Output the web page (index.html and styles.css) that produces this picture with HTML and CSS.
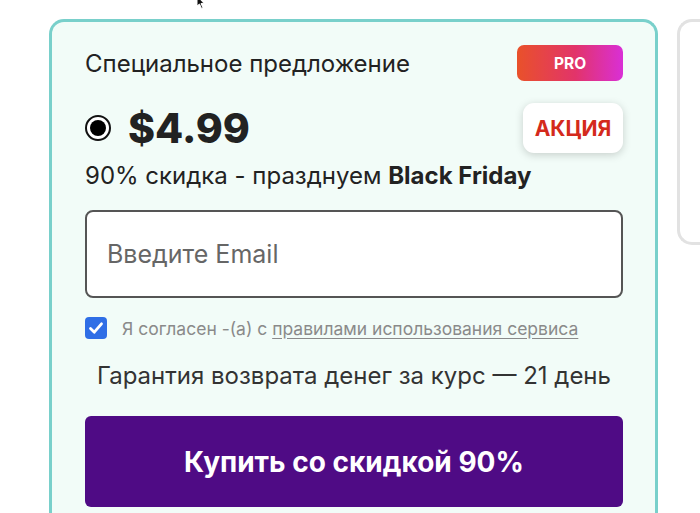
FILE: index.html
```html
<!DOCTYPE html>
<html lang="ru">
<head>
<meta charset="utf-8">
<link rel="stylesheet" href="styles.css">
</head>
<body>
<div class="page">
  <div class="card">
    <div class="row head">
      <span class="title">Специальное предложение</span>
      <span class="pro">PRO</span>
    </div>
    <div class="row price-row">
      <div class="price">
        <span class="radio"><span class="dot"></span></span>
        <span class="amount">$4.99</span>
      </div>
      <span class="sale">АКЦИЯ</span>
    </div>
    <div class="discount">90% скидка - празднуем <b>Black Friday</b></div>
    <div class="email">Введите Email</div>
    <label class="agree">
      <span class="check"><svg viewBox="0 0 22 22" width="22" height="22"><path d="M5.5 11.5 L9.3 15.2 L16.5 6.8" fill="none" stroke="#fff" stroke-width="2.8" stroke-linecap="round" stroke-linejoin="round"/></svg></span>
      <span class="agree-text">Я согласен -(а) с <u>правилами использования сервиса</u></span>
    </label>
    <div class="guarantee">Гарантия возврата денег за курс — 21 день</div>
    <div class="buy">Купить со скидкой 90%</div>
  </div>
  <div class="side"></div>
</div>
<svg class="cursor" viewBox="0 0 14 12" width="14" height="12"><path d="M3 -4 L3 6 L5.5 4 L7.5 8.5 L9 7.8 L7 3.5 L10 3.3 Z" fill="#111" stroke="#fff" stroke-width="1"/></svg>
</body>
</html>
```
FILE: styles.css
```css
html, body {
  margin: 0;
  padding: 0;
  background: #fff;
  font-family: Inter, "Noto Sans", sans-serif;
  color: #222;
  overflow: hidden;
  height: 513px;
}
.page {
  display: flex;
  align-items: flex-start;
  gap: 19px;
  padding: 19px 0 0 49px;
}
.card {
  flex: 0 0 auto;
  width: 609px;
  height: 494px;
  box-sizing: border-box;
  border: 3px solid #79d0cb;
  border-bottom: none;
  border-radius: 15px 15px 0 0;
  background: #f2fcf8;
  padding: 23px 32px 0 33px;
  display: flex;
  flex-direction: column;
}
.row {
  display: flex;
  justify-content: space-between;
  align-items: center;
}
.head { height: 36px; }
.title {
  font-size: 24px;
  color: #222;
}
.pro {
  width: 106px;
  height: 36px;
  border-radius: 7px;
  background: linear-gradient(90deg, #e9512a 0%, #e2346a 55%, #d92fd6 100%);
  color: #fff;
  font-weight: 700;
  font-size: 15.5px;
  display: flex;
  align-items: center;
  justify-content: center;
}
.price-row { margin-top: 22px; height: 50px; }
.price {
  display: flex;
  align-items: center;
  gap: 17px;
}
.radio {
  width: 26px;
  height: 26px;
  box-sizing: border-box;
  border: 2px solid #111;
  border-radius: 50%;
  background: #fff;
  display: flex;
  align-items: center;
  justify-content: center;
}
.dot {
  width: 16px;
  height: 16px;
  border-radius: 50%;
  background: #000;
}
.amount {
  font-size: 41px;
  font-weight: 800;
  color: #222;
  line-height: 1;
}
.sale {
  width: 100px;
  height: 50px;
  border-radius: 11px;
  background: #fff;
  box-shadow: 0 2px 8px rgba(0,0,0,0.18);
  color: #d42a1c;
  font-weight: 700;
  font-size: 21px;
  display: flex;
  align-items: center;
  justify-content: center;
}
.discount {
  margin-top: 9px;
  font-size: 24px;
  line-height: 28px;
}
.discount b { font-weight: 700; }
.email {
  margin-top: 20px;
  height: 88px;
  box-sizing: border-box;
  border: 2px solid #555;
  border-radius: 8px;
  background: #fff;
  padding-left: 20px;
  display: flex;
  align-items: center;
  font-size: 25px;
  color: #666;
}
.agree {
  margin-top: 19px;
  height: 22px;
  display: flex;
  align-items: center;
  gap: 15px;
}
.check {
  width: 22px;
  height: 22px;
  border-radius: 4px;
  background: #2f6ee6;
  display: block;
}
.check svg { display: block; }
.agree-text {
  font-size: 17.5px;
  color: #8a8a8a;
}
.agree-text u { text-underline-offset: 3px; }
.guarantee {
  margin-top: 23px;
  font-size: 24px;
  line-height: 28px;
  text-align: center;
  color: #333;
}
.buy {
  margin-top: 26px;
  height: 91px;
  flex: 0 0 auto;
  border-radius: 6px;
  background: #4f0b85;
  color: #fff;
  font-weight: 700;
  font-size: 28px;
  display: flex;
  align-items: center;
  justify-content: center;
}
.side {
  flex: 0 0 auto;
  width: 23px;
  height: 226px;
  box-sizing: border-box;
  border: 3px solid #e2e2e2;
  border-right: none;
  border-radius: 15px 0 0 15px;
  background: #fff;
}
.cursor {
  position: absolute;
  left: 194px;
  top: 0;
}
```
